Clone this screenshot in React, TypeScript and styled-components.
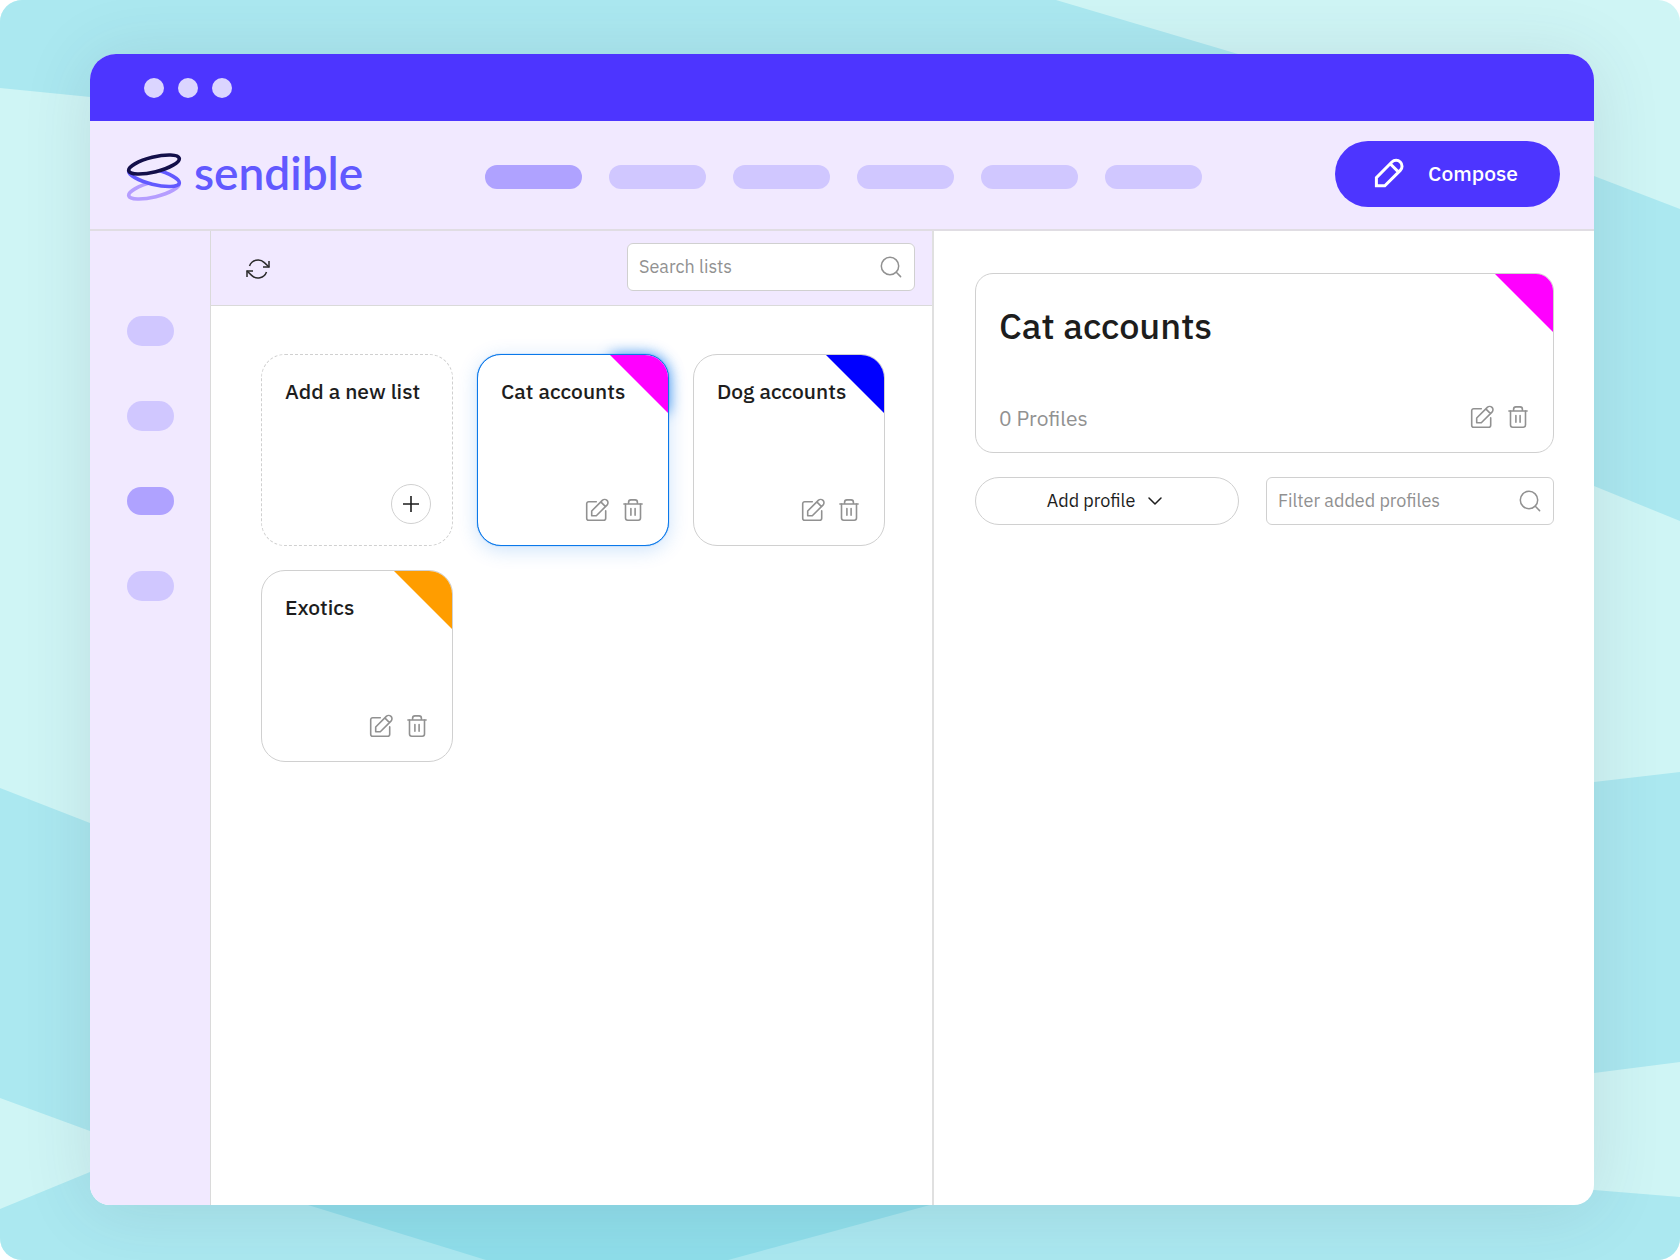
import React from "react";
import styled, { createGlobalStyle, css } from "styled-components";

const color = {
  brand: "#4d35ff",
  brandSoft: "#f1e9ff",
  pill: "#d0c7ff",
  pillActive: "#afa2ff",
  line: "#dadada",
  border: "#d0d0d0",
  ink: "#1d1d1d",
  muted: "#919191",
  select: "#0a78ea",
};

const GlobalStyle = createGlobalStyle`
  *, *::before, *::after { box-sizing: border-box; }
  body {
    margin: 0;
    background: #ffffff;
    color: ${color.ink};
    font-family: "IBM Plex Sans", Roboto, "Noto Sans", sans-serif;
  }
  button, input { font: inherit; color: inherit; }
  button { cursor: pointer; }
  h1, h2, p, ul { margin: 0; padding: 0; }
  ul { list-style: none; }
`;

const Page = styled.div`
  position: relative;
  isolation: isolate;
  display: flex;
  min-height: 100vh;
  padding: 54px 86px 55px 90px;
  border-radius: 22px;
  overflow: hidden;
`;

const Backdrop = styled.svg`
  position: absolute;
  inset: 0;
  z-index: -1;
  width: 100%;
  height: 100%;
`;

const Window = styled.div`
  flex: 1;
  min-width: 0;
  display: flex;
  flex-direction: column;
  border-radius: 26px 26px 20px 20px;
  background: #ffffff;
  overflow: hidden;
  box-shadow: 0 4px 70px rgba(60, 60, 80, 0.12);
`;

const TitleBar = styled.div`
  display: flex;
  align-items: center;
  gap: 14px;
  height: 67px;
  padding-left: 54px;
  background: ${color.brand};
`;

const Dot = styled.span`
  width: 20px;
  height: 20px;
  border-radius: 50%;
  background: #dbd5ff;
`;

const Header = styled.header`
  display: flex;
  align-items: center;
  height: 110px;
  padding: 0 34px 2px 36px;
  background: ${color.brandSoft};
  border-bottom: 2px solid #e0dde3;
`;

const Brand = styled.a`
  display: flex;
  align-items: center;
  gap: 12px;
  width: 240px;
  padding-top: 6px;
  color: #6259ff;
  text-decoration: none;
`;

const Wordmark = styled.span`
  font-family: Lato, sans-serif;
  font-weight: 600;
  font-size: 46px;
  line-height: 56px;
  padding-bottom: 8px;
`;

const MainNav = styled.nav`
  display: flex;
  gap: 27px;
  margin-left: 119px;
  padding-top: 6px;
`;

const NavPill = styled.a<{ $active?: boolean }>`
  width: 97px;
  height: 24px;
  border-radius: 12px;
  background: ${(p) => (p.$active ? color.pillActive : color.pill)};
`;

const ComposeButton = styled.button`
  display: flex;
  align-items: center;
  gap: 23px;
  height: 66px;
  margin-left: auto;
  padding: 0 42px 2px 38px;
  border: 0;
  border-radius: 33px;
  background: ${color.brand};
  color: #ffffff;
  font-weight: 500;
  font-size: 21px;
  line-height: 28px;
`;

const Body = styled.div`
  flex: 1;
  display: grid;
  grid-template-columns: 121px minmax(0, 723fr) minmax(0, 660fr);
`;

const Sidebar = styled.nav`
  display: flex;
  flex-direction: column;
  align-items: center;
  gap: 55px;
  padding-top: 85px;
  background: ${color.brandSoft};
  border-right: 1px solid ${color.line};
`;

const SideSlot = styled.a<{ $active?: boolean }>`
  display: flex;
  align-items: center;
  height: 30px;

  &::before {
    content: "";
    width: 47px;
    height: ${(p) => (p.$active ? "28px" : "30px")};
    border-radius: 15px;
    background: ${(p) => (p.$active ? color.pillActive : color.pill)};
  }
`;

const ListsPanel = styled.main`
  border-right: 2px solid #e0e0e0;
`;

const Toolbar = styled.div`
  display: flex;
  align-items: center;
  justify-content: space-between;
  height: 75px;
  padding: 0 17px 2px 35px;
  background: ${color.brandSoft};
  border-bottom: 1px solid ${color.line};
`;

const IconButton = styled.button`
  display: flex;
  padding: 0;
  border: 0;
  background: none;
`;

const RefreshButton = styled(IconButton)`
  padding-top: 4px;
  color: #2a2a2a;
`;

const Field = styled.label`
  display: flex;
  align-items: center;
  width: 288px;
  height: 48px;
  padding: 0 12px 0 11px;
  border: 1px solid ${color.border};
  border-radius: 6px;
  background: #ffffff;
  color: ${color.muted};
`;

const FieldInput = styled.input`
  flex: 1;
  min-width: 0;
  padding: 0;
  border: 0;
  outline: 0;
  background: none;
  color: ${color.ink};
  font-size: 18px;
  line-height: 24px;

  &::placeholder {
    color: ${color.muted};
    opacity: 1;
  }
`;

const CardGrid = styled.ul`
  display: grid;
  grid-template-columns: repeat(auto-fill, 192px);
  gap: 24px;
  padding: 48px 30px 48px 50px;
`;

const CardCell = styled.li`
  position: relative;
  isolation: isolate;
  display: flex;
`;

const CornerGlow = styled.span`
  position: absolute;
  top: 0;
  right: 0;
  z-index: -1;
  width: 58px;
  height: 58px;
  border-radius: 0 24px 0 0;
  box-shadow: 0 0 14px rgba(0, 115, 235, 0.75);
`;

const Card = styled.article<{ $look?: "dashed" | "selected" }>`
  position: relative;
  flex: 1;
  display: flex;
  flex-direction: column;
  justify-content: space-between;
  height: 192px;
  padding: 22px 23px 23px;
  border: 1px solid ${color.border};
  border-radius: 24px;
  background: #ffffff;
  overflow: hidden;
  ${(p) =>
    p.$look === "dashed" &&
    css`
      padding: 22px 21px 21px 23px;
      border-style: dashed;
    `}
  ${(p) =>
    p.$look === "selected" &&
    css`
      border-color: ${color.select};
      box-shadow: 0 0 1px ${color.select}, 0 4px 20px rgba(0, 115, 235, 0.2);
    `}
`;

const Corner = styled.span<{ $fill: string }>`
  position: absolute;
  top: 0;
  right: 0;
  width: 58px;
  height: 58px;
  background: ${(p) => p.$fill};
  clip-path: polygon(0 0, 100% 0, 100% 100%);
`;

const CardTitle = styled.h2`
  position: relative;
  z-index: 1;
  font-weight: 500;
  font-size: 21px;
  line-height: 28px;
  white-space: nowrap;
`;

const Actions = styled.div`
  display: flex;
  justify-content: flex-end;
  gap: 12px;
  color: ${color.muted};
`;

const AddButton = styled.button`
  display: flex;
  align-items: center;
  justify-content: center;
  align-self: flex-end;
  width: 40px;
  height: 40px;
  padding: 0;
  border: 1px solid ${color.border};
  border-radius: 50%;
  background: #ffffff;
`;

const DetailPanel = styled.section`
  padding: 42px 40px 42px 41px;
`;

const Summary = styled.article`
  position: relative;
  display: flex;
  flex-direction: column;
  justify-content: space-between;
  height: 180px;
  padding: 30px 23px 23px;
  border: 1px solid ${color.border};
  border-radius: 18px;
  overflow: hidden;
`;

const SummaryTitle = styled.h1`
  font-weight: 500;
  font-size: 36px;
  line-height: 44px;
`;

const SummaryFoot = styled.div`
  display: flex;
  align-items: center;
  justify-content: space-between;
  height: 24px;
`;

const ProfileCount = styled.p`
  padding-top: 2px;
  color: ${color.muted};
  font-size: 21px;
  line-height: 28px;
`;

const Controls = styled.div`
  display: flex;
  gap: 27px;
  margin-top: 24px;
`;

const AddProfile = styled.button`
  flex: 1;
  display: flex;
  align-items: center;
  justify-content: center;
  gap: 13px;
  height: 48px;
  padding: 0 5px 0 0;
  border: 1px solid ${color.border};
  border-radius: 24px;
  background: #ffffff;
  font-size: 18px;
  line-height: 24px;
`;

const line = {
  fill: "none",
  stroke: "currentColor",
  strokeLinecap: "round",
  strokeLinejoin: "round",
} as const;

const SearchIcon = () => (
  <svg width="22" height="22" viewBox="0 0 22 22" {...line} strokeWidth="1.5" aria-hidden="true">
    <circle cx="10" cy="10" r="8.7" />
    <path d="M16.3 16.3L20.6 20.6" />
  </svg>
);

const RefreshIcon = () => (
  <svg width="24" height="24" viewBox="0 0 24 24" {...line} strokeLinecap="butt" strokeLinejoin="miter" strokeWidth="1.5" aria-hidden="true">
    <path d="M23 4v6h-6M1 20v-6h6" />
    <path d="M3.51 9a9 9 0 0 1 14.85-3.36L23 10M1 14l4.64 4.36A9 9 0 0 0 20.49 15" />
  </svg>
);

const EditIcon = () => (
  <svg width="24" height="24" viewBox="0 0 24 24" {...line} strokeWidth="1.6" aria-hidden="true">
    <path d="M11.3 3.7H3.7a2 2 0 0 0-2 2v14.6a2 2 0 0 0 2 2h15a2 2 0 0 0 2-2V12.9" />
    <path d="M6.7 17.7V13L17.3 2.4a3.3 3.3 0 0 1 4.7 4.7L11.3 17.7zM15.8 3.9l4.7 4.7" />
  </svg>
);

const TrashIcon = () => (
  <svg width="24" height="24" viewBox="0 0 24 24" {...line} strokeWidth="1.6" aria-hidden="true">
    <path d="M2.9 6h18.2M7.6 6V4.2a2.3 2.3 0 0 1 2.3-2.3h4.2a2.3 2.3 0 0 1 2.3 2.3V6" />
    <path d="M4.5 6v14a2.2 2.2 0 0 0 2.2 2.2h10.6a2.2 2.2 0 0 0 2.2-2.2V6M9.9 10.5v6.8M14.1 10.5v6.8" />
  </svg>
);

const PencilIcon = () => (
  <svg width="32" height="32" viewBox="0 0 32 32" {...line} strokeLinecap="butt" strokeLinejoin="miter" strokeWidth="3" aria-hidden="true">
    <path d="M3.4 28.8v-8.2L18.9 5a5.9 5.9 0 0 1 8.4 8.4L11.8 28.8zM17.2 6.7l8.4 8.4" />
  </svg>
);

const PlusIcon = () => (
  <svg width="18" height="18" viewBox="0 0 18 18" {...line} strokeLinecap="butt" strokeWidth="1.6" aria-hidden="true">
    <path d="M9 1v16M1 9h16" />
  </svg>
);

const ChevronIcon = () => (
  <svg width="14" height="8" viewBox="0 0 14 8" {...line} strokeWidth="1.5" aria-hidden="true">
    <path d="M1 1l6 6 6-6" />
  </svg>
);

const RingsLogo = () => (
  <svg width="56" height="50" viewBox="126 152 56 50" fill={color.brandSoft} strokeWidth="3.6" aria-hidden="true">
    <ellipse cx="154" cy="189.5" rx="26" ry="7.4" transform="rotate(-14 154 189.5)" stroke="#b59dff" />
    <ellipse cx="154" cy="177" rx="26" ry="7.4" transform="rotate(14 154 177)" stroke="#6259ff" />
    <ellipse cx="154" cy="164.5" rx="26" ry="7.4" transform="rotate(-14 154 164.5)" stroke="#130f4a" />
  </svg>
);

const Shards = () => (
  <Backdrop viewBox="0 0 1680 1260" preserveAspectRatio="none" aria-hidden="true">
    <rect width="1680" height="1260" fill="#cff5f5" />
    <g fill="#abe8f0">
      <path d="M0 0H1056L1238 54L800 168L0 88z" />
      <path d="M1680 209L1594 176L1200 325L1594 486L1680 521z" />
      <path d="M1680 772L1594 782L1200 950L1594 1073L1680 1062z" />
      <path d="M0 788L90 823L500 980L90 1131L0 1098z" />
      <path d="M0 1209L90 1172L800 1110L1594 1190L1680 1197V1260H0z" />
    </g>
    <path d="M486 1260L308 1205L620 1120L930 1205L728 1260z" fill="#8fdeea" />
  </Backdrop>
);

const SearchField = ({ name }: { name: string }) => (
  <Field>
    <FieldInput type="text" placeholder={name} aria-label={name} />
    <SearchIcon />
  </Field>
);

const ItemActions = ({ of }: { of: string }) => (
  <Actions>
    <IconButton type="button" aria-label={`Edit ${of}`}>
      <EditIcon />
    </IconButton>
    <IconButton type="button" aria-label={`Delete ${of}`}>
      <TrashIcon />
    </IconButton>
  </Actions>
);

const lists = [
  { name: "Cat accounts", fill: "#ff00ff", selected: true },
  { name: "Dog accounts", fill: "#0000ff", selected: false },
  { name: "Exotics", fill: "#ff9d00", selected: false },
];

const sections = ["Home", "Publish", "Engage", "Monitor", "Measure", "Library"];
const tools = ["Overview", "Profiles", "Lists", "Settings"];

export default function App() {
  return (
    <>
      <GlobalStyle />
      <Page>
        <Shards />
        <Window>
          <TitleBar>
            <Dot />
            <Dot />
            <Dot />
          </TitleBar>
          <Header>
            <Brand href="#">
              <RingsLogo />
              <Wordmark>sendible</Wordmark>
            </Brand>
            <MainNav aria-label="Main">
              {sections.map((s, i) => (
                <NavPill key={s} href="#" aria-label={s} $active={i === 0} />
              ))}
            </MainNav>
            <ComposeButton type="button">
              <PencilIcon />
              Compose
            </ComposeButton>
          </Header>
          <Body>
            <Sidebar aria-label="Tools">
              {tools.map((t) => (
                <SideSlot key={t} href="#" aria-label={t} $active={t === "Lists"} />
              ))}
            </Sidebar>
            <ListsPanel>
              <Toolbar>
                <RefreshButton type="button" aria-label="Refresh">
                  <RefreshIcon />
                </RefreshButton>
                <SearchField name="Search lists" />
              </Toolbar>
              <CardGrid>
                <CardCell>
                  <Card $look="dashed">
                    <CardTitle>Add a new list</CardTitle>
                    <AddButton type="button" aria-label="Add a new list">
                      <PlusIcon />
                    </AddButton>
                  </Card>
                </CardCell>
                {lists.map((l) => (
                  <CardCell key={l.name}>
                    {l.selected && <CornerGlow />}
                    <Card $look={l.selected ? "selected" : undefined}>
                      <Corner $fill={l.fill} />
                      <CardTitle>{l.name}</CardTitle>
                      <ItemActions of={l.name} />
                    </Card>
                  </CardCell>
                ))}
              </CardGrid>
            </ListsPanel>
            <DetailPanel>
              <Summary>
                <Corner $fill="#ff00ff" />
                <SummaryTitle>Cat accounts</SummaryTitle>
                <SummaryFoot>
                  <ProfileCount>0 Profiles</ProfileCount>
                  <ItemActions of="Cat accounts" />
                </SummaryFoot>
              </Summary>
              <Controls>
                <AddProfile type="button">
                  Add profile
                  <ChevronIcon />
                </AddProfile>
                <SearchField name="Filter added profiles" />
              </Controls>
            </DetailPanel>
          </Body>
        </Window>
      </Page>
    </>
  );
}
